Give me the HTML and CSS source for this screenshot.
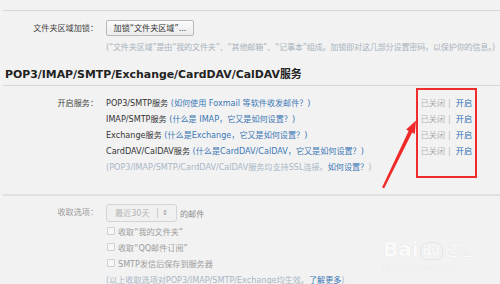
FILE: index.html
```html
<!DOCTYPE html>
<html lang="zh-CN">
<head>
<meta charset="utf-8">
<title>POP3/IMAP/SMTP 设置</title>
<link rel="stylesheet" href="styles.css">
</head>
<body>
<div class="page">
  <div class="rule rule-top"></div>

  <div class="row row-lock">
    <div class="label">文件夹区域加锁：</div>
    <div class="content">
      <button class="btn" type="button">加锁“文件夹区域”...</button>
      <p class="hint">(“文件夹区域”是由“我的文件夹”、“其他邮箱”、“记事本”组成。加锁即对这几部分设置密码，以保护你的信息。)</p>
    </div>
  </div>

  <h2 class="section-title">POP3/IMAP/SMTP/Exchange/CardDAV/CalDAV服务</h2>
  <div class="rule"></div>

  <div class="row row-services">
    <div class="label">开启服务：</div>
    <ul class="svc-list">
      <li class="svc"><span class="svc-name">POP3/SMTP服务 <a class="link">(如何使用 Foxmail 等软件收发邮件？)</a></span><span class="status"><span class="off">已关闭</span><span class="sep">|</span><a class="on">开启</a></span></li>
      <li class="svc"><span class="svc-name">IMAP/SMTP服务 <a class="link">(什么是 IMAP，它又是如何设置？)</a></span><span class="status"><span class="off">已关闭</span><span class="sep">|</span><a class="on">开启</a></span></li>
      <li class="svc"><span class="svc-name">Exchange服务 <a class="link">(什么是Exchange，它又是如何设置？)</a></span><span class="status"><span class="off">已关闭</span><span class="sep">|</span><a class="on">开启</a></span></li>
      <li class="svc"><span class="svc-name">CardDAV/CalDAV服务 <a class="link">(什么是CardDAV/CalDAV，它又是如何设置？)</a></span><span class="status"><span class="off">已关闭</span><span class="sep">|</span><a class="on">开启</a></span></li>
      <li class="svc svc-note">(POP3/IMAP/SMTP/CardDAV/CalDAV服务均支持SSL连接。<a class="link">如何设置？</a>)</li>
    </ul>
  </div>

  <div class="rule rule-thick"></div>

  <div class="row row-fetch">
    <div class="label label-dim">收取选项：</div>
    <div class="content">
      <div class="select-line">
        <span class="select"><span class="select-val">最近30天</span><span class="select-arrow">⇕</span></span>
        <span class="select-after">的邮件</span>
      </div>
      <label class="check"><span class="box"></span>收取“我的文件夹”</label>
      <label class="check"><span class="box"></span>收取“QQ邮件订阅”</label>
      <label class="check"><span class="box"></span>SMTP发信后保存到服务器</label>
      <p class="fetch-note">(以上收取选项对POP3/IMAP/SMTP/Exchange均生效。<a class="link">了解更多</a>)</p>
    </div>
  </div>

  <div class="highlight-box"></div>
  <svg class="arrow" width="500" height="284" viewBox="0 0 500 284" aria-hidden="true">
    <polygon points="382,187.5 408.6,131 406.2,129.6 416,120.5 414.8,134 412.2,132.6 384.2,188.2" fill="#f02a2a"/>
  </svg>

  <div class="watermark">
    <div class="wm-top"><span class="wm-bai">Bai</span><span class="wm-du">du</span><span class="wm-jy">经验</span></div>
    <div class="wm-url">jingyan.baidu.com</div>
  </div>
</div>
</body>
</html>
```
FILE: styles.css
```css
html, body {
  margin: 0;
  padding: 0;
  background: #f2f2f2;
  overflow: hidden;
}
body {
  width: 500px;
  height: 284px;
  font-family: "DejaVu Sans", Verdana, "Noto Sans CJK SC", sans-serif;
  font-size: 8.1px;
  color: #333;
}
.page {
  position: relative;
  padding: 10px 0 0 3px;
  height: 284px;
  box-sizing: border-box;
  white-space: nowrap;
}
.rule {
  height: 1px;
  background: #d6d6d6;
}
.rule-thick {
  height: 2px;
  background: #e0e0e0;
  margin-top: 19px;
}
.row {
  display: flex;
  align-items: flex-start;
}
.label {
  width: 95px;
  flex: none;
  text-align: right;
  line-height: 16px;
  color: #444;
  padding-right: 8px;
}
.label-dim {
  color: #9a9a9a;
}
.content {
  flex: 1;
  min-width: 0;
}
.row-lock {
  margin-top: 9px;
}
.btn {
  display: block;
  height: 16px;
  width: 88px;
  padding: 0;
  margin: 0;
  font: inherit;
  color: #333;
  background: linear-gradient(#fbfbfb, #ececec);
  border: 1px solid #b9b9b9;
  border-radius: 2px;
  line-height: 14px;
}
.hint {
  margin: 3px 0 0;
  line-height: 16px;
  color: #a9b3bd;
  letter-spacing: -0.2px;
}
.section-title {
  margin: 12px 0 0 2px;
  font-size: 10.9px;
  line-height: 16px;
  font-weight: bold;
  color: #222;
}
.section-title + .rule {
  margin-top: 2px;
}
.row-services {
  margin-top: 9px;
}
.svc-list {
  list-style: none;
  margin: 0;
  padding: 0 28px 0 0;
  flex: 1;
}
.svc {
  display: flex;
  line-height: 16px;
  height: 16px;
}
.svc-name {
  flex: 1;
  color: #333;
}
.link {
  color: #3a77b5;
}
.status {
  flex: none;
  color: #b0b0b0;
}
.sep {
  margin: 0 5px 0 3px;
  color: #bbb;
}
.on {
  color: #2f6cb0;
}
.svc-note {
  color: #a9b7c6;
}
.row-fetch {
  margin-top: 8px;
}
.select-line {
  display: flex;
  align-items: center;
  height: 18px;
}
.select {
  display: flex;
  align-items: center;
  width: 71px;
  height: 18px;
  box-sizing: border-box;
  border: 1px solid #d4d4d4;
  border-radius: 3px;
  background: #f0f0f0;
}
.select-val {
  width: 51px;
  padding-left: 8px;
  box-sizing: border-box;
  color: #b5b5b5;
  border-right: 1px solid #cfcfcf;
  line-height: 10px;
}
.select-arrow {
  padding-left: 4px;
  font-size: 7px;
  color: #999;
}
.select-after {
  margin-left: 3px;
  color: #8c8c8c;
}
.check {
  display: flex;
  align-items: center;
  height: 16px;
  color: #9c9c9c;
}
.check:first-of-type {
  margin-top: 1px;
}
.box {
  width: 6px;
  height: 6px;
  margin: 0 3px 0 1px;
  border: 1px solid #cfcfcf;
  border-radius: 1px;
  background: #f7f7f7;
}
.fetch-note {
  margin: 1px 0 0;
  line-height: 16px;
  color: #a9b7c6;
}
.highlight-box {
  position: absolute;
  left: 416px;
  top: 88px;
  width: 61px;
  height: 90px;
  box-sizing: border-box;
  border: 2px solid #ef2d2d;
}
.arrow {
  position: absolute;
  left: 0;
  top: 0;
  pointer-events: none;
}
.watermark {
  position: absolute;
  left: 383px;
  top: 232px;
  color: #fafafa;
  text-shadow: 0 0 1px #d8d8d8;
  font-family: "DejaVu Sans", "Noto Sans CJK SC", sans-serif;
}
.wm-top {
  display: flex;
  align-items: flex-end;
  height: 28px;
}
.wm-bai {
  font-size: 20px;
  font-weight: bold;
  line-height: 22px;
}
.wm-du {
  font-size: 12px;
  font-weight: bold;
  line-height: 16px;
  padding: 0 2px;
  margin-left: 1px;
  border-radius: 8px 8px 6px 6px;
  border: 1px solid #e4e4e4;
}
.wm-jy {
  font-size: 14px;
  line-height: 18px;
  margin-left: 2px;
}
.wm-url {
  font-family: "Liberation Serif", serif;
  font-size: 11px;
  line-height: 12px;
  margin-top: 1px;
}
```
